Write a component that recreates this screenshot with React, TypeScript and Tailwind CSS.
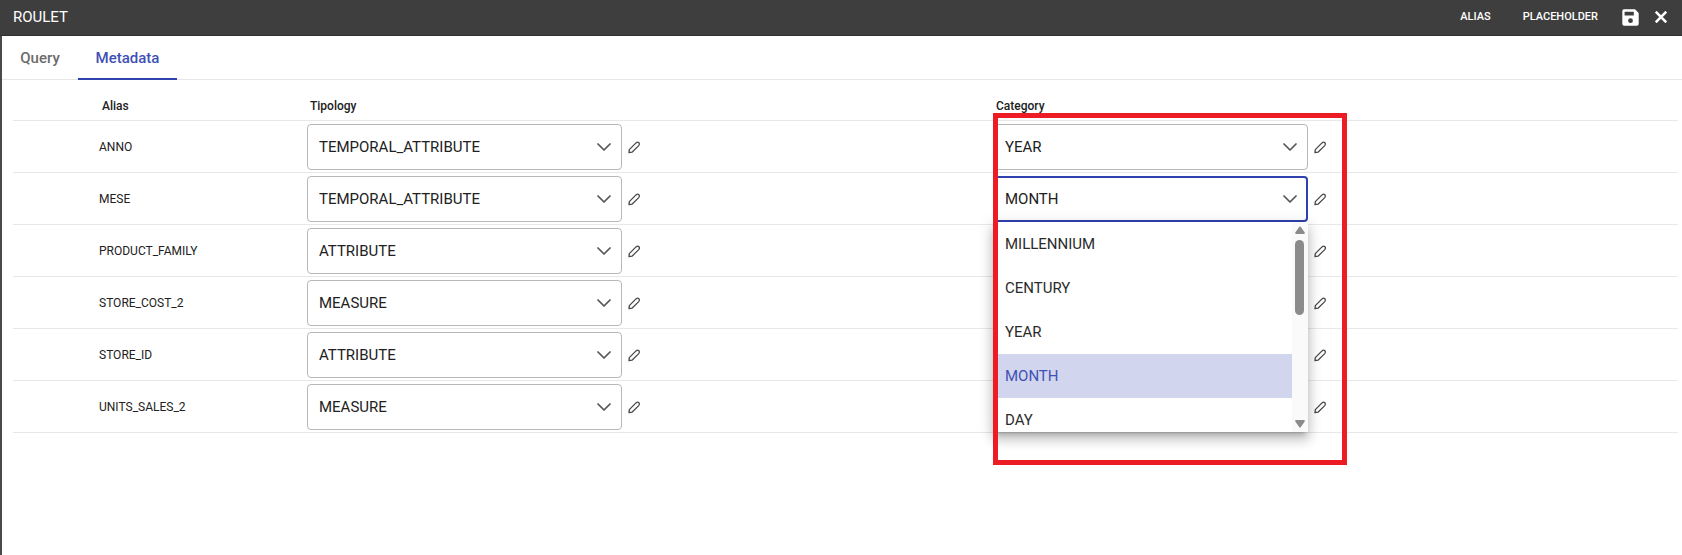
import { useState } from "react";

type Row = { alias: string; tipology: string; category?: string; open?: boolean };

const rows: Row[] = [
  { alias: "ANNO", tipology: "TEMPORAL_ATTRIBUTE", category: "YEAR" },
  { alias: "MESE", tipology: "TEMPORAL_ATTRIBUTE", category: "MONTH", open: true },
  { alias: "PRODUCT_FAMILY", tipology: "ATTRIBUTE" },
  { alias: "STORE_COST_2", tipology: "MEASURE" },
  { alias: "STORE_ID", tipology: "ATTRIBUTE" },
  { alias: "UNITS_SALES_2", tipology: "MEASURE" },
];

const periods = ["MILLENNIUM", "CENTURY", "YEAR", "MONTH", "DAY"];

function Chevron() {
  return (
    <svg
      viewBox="0 0 14 14"
      className="pointer-events-none absolute top-1/2 right-[11px] size-3.5 -translate-y-1/2 text-[#555]"
      fill="none"
      stroke="currentColor"
      strokeWidth="1.7"
      strokeLinecap="round"
      strokeLinejoin="round"
      aria-hidden="true"
    >
      <path d="M1 4 L7 10 L13 4" />
    </svg>
  );
}

function EditButton({ label }: { label: string }) {
  return (
    <button type="button" aria-label={label} className="ml-[5px] flex size-3.5 items-center justify-center text-[#484848]">
      <svg viewBox="0 0 14 14" className="size-3.5" fill="none" stroke="currentColor" strokeWidth="1.3" strokeLinejoin="round" aria-hidden="true">
        <path d="M2 12.6 L2.3 9.6 L9 2.9 Q10.6 1.6 11.9 2.7 Q13.1 4 11.7 5.6 L5 12.2 Z" />
      </svg>
    </button>
  );
}

function Field({ label, value, active }: { label: string; value: string; active?: boolean }) {
  return (
    <div className="relative w-[315px]">
      <select
        aria-label={label}
        defaultValue={value}
        className={
          active
            ? "block h-[46px] w-full appearance-none rounded border-2 border-[#3042ae] bg-white px-2.5 text-[15px] text-[#212121] outline-none"
            : "block h-[46px] w-full appearance-none rounded border border-[#b8b8b8] bg-white px-[11px] text-[15px] text-[#212121] outline-none"
        }
      >
        <option>{value}</option>
      </select>
      <Chevron />
    </div>
  );
}

function PeriodList() {
  const [selected, setSelected] = useState("MONTH");
  return (
    <div className="absolute top-full left-0 z-10 flex h-[210px] w-[315px] overflow-hidden bg-white shadow-[0_5px_5px_-3px_rgba(0,0,0,0.2),0_8px_10px_1px_rgba(0,0,0,0.14),0_3px_14px_2px_rgba(0,0,0,0.12)]">
      <ul role="listbox" aria-label="Category" className="flex-1 text-[15px] text-[#2b2b2b]">
        {periods.map((period) => (
          <li
            key={period}
            role="option"
            aria-selected={period === selected}
            onClick={() => setSelected(period)}
            className={
              period === selected
                ? "flex h-11 items-center bg-[#d1d5ed] px-3 text-[#3f51b5]"
                : "flex h-11 items-center px-3"
            }
          >
            {period}
          </li>
        ))}
      </ul>
      <div className="flex w-4 flex-col items-center justify-between bg-[#fafafa] py-1 text-[#8b8b8b]">
        <svg viewBox="0 0 10 8" className="h-2 w-2.5" fill="currentColor" aria-hidden="true">
          <path d="M4.3 0.8 Q5 0 5.7 0.8 L9.7 6.6 Q10 8 9 8 L1 8 Q0 8 0.3 6.6 Z" />
        </svg>
        <div className="mt-1.5 mb-auto h-[75px] w-[9px] rounded-full bg-[#8b8b8b]" />
        <svg viewBox="0 0 10 8" className="h-2 w-2.5" fill="currentColor" aria-hidden="true">
          <path d="M4.3 7.2 Q5 8 5.7 7.2 L9.7 1.4 Q10 0 9 0 L1 0 Q0 0 0.3 1.4 Z" />
        </svg>
      </div>
    </div>
  );
}

export default function App() {
  return (
    <div className="flex min-h-screen flex-col bg-white font-[Roboto,sans-serif] text-[#212121]">
      <header className="flex h-9 items-center justify-between border-b border-[#2f2f2f] bg-[#3e3e3e] pr-[15px] pl-[13px] text-white">
        <h1 className="text-[15px]">ROULET</h1>
        <div className="flex items-center pb-px text-[11px] font-medium">
          <button type="button" className="mr-8">ALIAS</button>
          <button type="button" className="mr-6">PLACEHOLDER</button>
          <button type="button" aria-label="Save" className="mr-4">
            <svg viewBox="0 0 17 17" className="size-[17px]" aria-hidden="true">
              <path
                fill="currentColor"
                fillRule="evenodd"
                d="M2 0.3 H13 L16.7 4 V14.8 Q16.7 16.7 14.8 16.7 H2.2 Q0.3 16.7 0.3 14.8 V2.2 Q0.3 0.3 2 0.3 Z M2.6 2.8 V6.6 H11.8 V2.8 Z M8.5 9.3 A2.4 2.4 0 1 0 8.5 14.1 A2.4 2.4 0 1 0 8.5 9.3 Z"
              />
            </svg>
          </button>
          <button type="button" aria-label="Close">
            <svg viewBox="0 0 12 12" className="size-3" stroke="currentColor" strokeWidth="2.6" aria-hidden="true">
              <path d="M0.7 0.7 L11.3 11.3 M11.3 0.7 L0.7 11.3" />
            </svg>
          </button>
        </div>
      </header>

      <main className="flex-1 border-l-2 border-[#4a4a4a]">
        <nav className="flex h-11 border-b border-[#e6e6e6] text-[15px] font-medium">
          <button type="button" className="w-19 pt-px text-[#6b6b6b]">Query</button>
          <button type="button" className="-mb-px w-[99px] border-b-2 border-[#3042ae] pt-0.5 text-[#3f51b5]">Metadata</button>
        </nav>

        <div className="pr-1 pl-[11px]">
          <table className="w-full table-fixed border-collapse text-left">
            <thead>
              <tr className="h-10 border-b border-[#e8e8e8] align-bottom text-xs">
                <th className="w-[86px]" />
                <th className="w-[208px] pb-1.5 pl-[3px] font-medium">Alias</th>
                <th className="w-[41.2%] pb-1.5 pl-[3px] font-medium">Tipology</th>
                <th className="pb-1.5 pl-[3px] font-medium">Category</th>
              </tr>
            </thead>
            <tbody>
              {rows.map((row, index) => (
                <tr key={row.alias} className="h-[52px] border-b border-[#e8e8e8]">
                  <td />
                  <td className="pt-px text-xs">{row.alias}</td>
                  <td className="pt-0.5">
                    <div className="flex items-center">
                      <Field label={row.alias + " tipology"} value={row.tipology} />
                      <EditButton label={"Edit tipology of " + row.alias} />
                    </div>
                  </td>
                  <td className="pt-0.5">
                    <div className="relative flex items-center">
                      {row.category ? (
                        <Field label={row.alias + " category"} value={row.category} active={row.open} />
                      ) : (
                        <div className="w-[315px]" />
                      )}
                      <EditButton label={"Edit category of " + row.alias} />
                      {row.open && <PeriodList />}
                      {index === 0 && (
                        <div className="pointer-events-none absolute -top-[11px] left-0 z-20 h-[352px] w-[354px] border-5 border-[#ed1c24]" />
                      )}
                    </div>
                  </td>
                </tr>
              ))}
            </tbody>
          </table>
        </div>
      </main>
    </div>
  );
}
